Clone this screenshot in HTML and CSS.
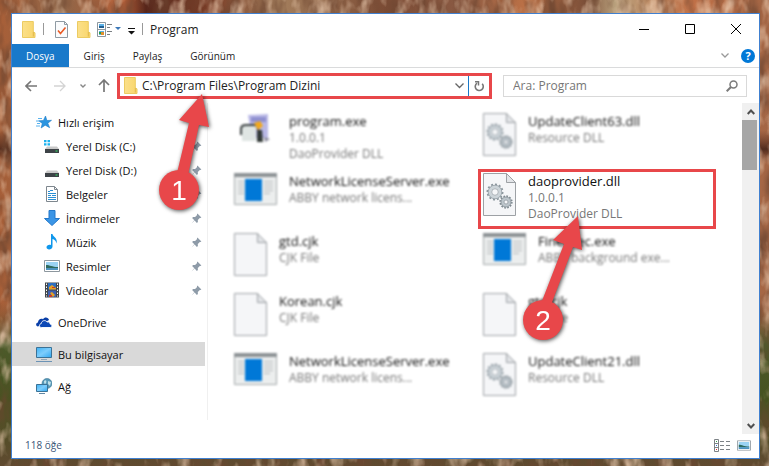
FILE: index.html
```
<!DOCTYPE html>
<html lang="tr">
  <head>
    <meta charset="UTF-8">
    <meta name="viewport" content="width=device-width, initial-scale=1">
    <title>Program</title>

    <link rel="stylesheet" href="styles.css">
  </head>
  <body>
    <!-- icons used more than once -->
    <svg class="sprite" aria-hidden="true">
      <defs>
        <linearGradient id="foldFill" x1="0" y1="0" x2="1" y2="0">
          <stop offset="0" stop-color="#fbe08a"/>
          <stop offset="1" stop-color="#f9d66c"/>
        </linearGradient>
        <linearGradient id="screenFill" x1="0" y1="0" x2="1" y2="1">
          <stop offset="0" stop-color="#3fb2f5"/>
          <stop offset=".5" stop-color="#7dcdfc"/>
          <stop offset="1" stop-color="#2fa6f0"/>
        </linearGradient>
      </defs>
      <symbol id="folder" viewBox="0 0 14 17">
        <path d="M.5.5h10.800v10.500l1.700.8v4.700H.5z" fill="url(#foldFill)" stroke="#eccb62"/>
        <path d="M11.300 11v4.500" stroke="#e0b84c" fill="none"/>
      </symbol>
      <symbol id="pin" viewBox="0 0 11 11">
        <path d="M6.400.6l4 4-1 .5-.6-.2-2 2 .1 2-1 1L3.600 7.600.500 10.500 3.300 7.200 1.100 5l1-1 2 .1 2-2-.2-.6z" fill="#8e9ba8"/>
      </symbol>
      <symbol id="drive" viewBox="0 0 16 16">
        <path d="M3 8.500h10l2 2.500H1z" fill="#c9c9c9"/>
        <path d="M1 11h14v4H1z" fill="#3d4347"/>
        <path d="M11.500 12.500h2v1h-2z" fill="#36e066"/>
      </symbol>
      <symbol id="doc" viewBox="0 0 33 43">
        <path d="M.5.500h23l9 9v33H.5z" fill="#f5f6f8" stroke="#9da1a5"/>
        <path d="M23.500.500v9h9z" fill="#e3e5e8" stroke="#9da1a5"/>
      </symbol>
      <symbol id="gears" viewBox="0 0 33 43">
        <use href="#doc"/>
        <circle cx="12" cy="19" r="7.500" fill="none" stroke="#8c979e" stroke-width="2" stroke-dasharray="2 1.900"/>
        <circle cx="12" cy="19" r="5.200" fill="#f5f6f8" stroke="#ccd4d9" stroke-width="3.400"/>
        <circle cx="12" cy="19" r="6.800" fill="none" stroke="#8c979e" stroke-width=".7"/>
        <circle cx="12" cy="19" r="3.300" fill="#f5f6f8" stroke="#8c979e" stroke-width=".7"/>
        <circle cx="23" cy="29" r="5.800" fill="none" stroke="#7f8a91" stroke-width="1.700" stroke-dasharray="1.700 1.300"/>
        <circle cx="23" cy="29" r="3.700" fill="#f5f6f8" stroke="#bcc5cb" stroke-width="3"/>
        <circle cx="23" cy="29" r="5" fill="none" stroke="#7f8a91" stroke-width=".7"/>
        <circle cx="23" cy="29" r="2" fill="#f5f6f8" stroke="#7f8a91" stroke-width=".7"/>
      </symbol>
      <symbol id="app" viewBox="0 0 43 33">
        <path d="M.5.500h42v31H.5z" fill="#eceeee" stroke="#a3a8aa"/>
        <path d="M0 0h43v4H0z" fill="#8d9295"/>
        <path d="M4 8.500h6M4 11.500h6M4 14.500h6M4 17.500h6M4 20.500h6M30 8.500h9M30 11.500h9M30 14.500h9M30 17.500h9M30 20.500h6" stroke="#b5b9bb"/>
        <path d="M11 6h17v22H11z" fill="#0078d7"/>
      </symbol>
      <symbol id="picture" viewBox="0 0 16 12">
        <path d="M.5.500h15v11H.5z" fill="#fff" stroke="#8d979e"/>
        <path d="M2 2h12v8H2z" fill="#9bd3f3"/>
        <path d="M2 5c4 0 6 2 12 2v1H2z" fill="#2e6a5e"/>
        <path d="M2 8h12v2H2z" fill="#4d93bf"/>
      </symbol>
    </svg>

    <!-- bark wallpaper -->
    <svg class="wallpaper" aria-hidden="true">
      <defs>
        <linearGradient id="bark">
          <stop offset="0" stop-color="#a85f38"/>
          <stop offset=".08" stop-color="#8d6548"/>
          <stop offset=".16" stop-color="#b9623a"/>
          <stop offset=".19" stop-color="#56251a"/>
          <stop offset=".28" stop-color="#7c4029"/>
          <stop offset=".36" stop-color="#a5805e"/>
          <stop offset=".5" stop-color="#7c4c35"/>
          <stop offset=".6" stop-color="#8a5a43"/>
          <stop offset=".68" stop-color="#ba7046"/>
          <stop offset=".76" stop-color="#7d5039"/>
          <stop offset=".8" stop-color="#b8a07c"/>
          <stop offset=".9" stop-color="#c07047"/>
          <stop offset="1" stop-color="#a36645"/>
        </linearGradient>
        <linearGradient id="ground" x1="0" y1="0" x2="0" y2="1">
          <stop offset=".28" stop-color="#4a2015" stop-opacity="0"/>
          <stop offset=".32" stop-color="#2d120d" stop-opacity=".7"/>
          <stop offset=".35" stop-color="#4a2015" stop-opacity="0"/>
          <stop offset=".65" stop-color="#6b4a30" stop-opacity="0"/>
          <stop offset=".74" stop-color="#4c5a2a"/>
          <stop offset=".86" stop-color="#46521f"/>
          <stop offset="1" stop-color="#604a30"/>
        </linearGradient>
        <filter id="grain" x="0" y="0" width="100%" height="100%">
          <feTurbulence type="fractalNoise" baseFrequency=".07 .03" numOctaves="3" seed="7"/>
          <feColorMatrix values="0 0 0 0 .15  0 0 0 0 .06  0 0 0 0 .03  2 0 0 0 -.85"/>
        </filter>
        <filter id="light" x="0" y="0" width="100%" height="100%">
          <feTurbulence type="fractalNoise" baseFrequency=".08 .04" numOctaves="3" seed="21"/>
          <feColorMatrix values="0 0 0 0 .85  0 0 0 0 .62  0 0 0 0 .45  0 1.800 0 0 -.85"/>
        </filter>
      </defs>
      <rect width="100%" height="100%" fill="url(#bark)"/>
      <rect width="100%" height="100%" fill="url(#ground)"/>
      <rect width="100%" height="100%" filter="url(#grain)"/>
      <rect width="100%" height="100%" filter="url(#light)"/>
    </svg>

    <main class="window">
      <header class="titlebar">
        <svg class="folder" aria-hidden="true"><use href="#folder"/></svg>
        <span class="divider"></span>
        <button class="quick" aria-label="Özellikler">
          <svg width="13" height="17" viewBox="0 0 13 17">
            <path d="M.5.500h9l3 3v13H.5z" fill="#fafbfc" stroke="#8f9aa3"/>
            <path d="M9.500.500v3h3" fill="none" stroke="#8f9aa3"/>
            <path d="M3 9.500l2.500 3 5-6" fill="none" stroke="#ea5a24" stroke-width="1.600"/>
          </svg>
        </button>
        <button class="quick" aria-label="Yeni klasör">
          <svg class="folder"><use href="#folder"/></svg>
        </button>
        <button class="quick view" aria-label="Görünüm seçenekleri">
          <svg width="24" height="15" viewBox="0 0 24 15">
            <path d="M.5.500h8v14h-8zM.5 7.500h8" fill="#fff" stroke="#8d979e"/>
            <path d="M2 2h5v2H2z" fill="#5bb1e8"/>
            <path d="M2 4h5v2H2z" fill="#1f5f92"/>
            <path d="M2 9h5v4H2z" fill="#5bb1e8"/>
            <path d="M4 10h3v3H4z" fill="#e0902c"/>
            <path d="M2 10h2v2H2z" fill="#2c9c3e"/>
            <path d="M10 2.500h5M10 5.500h3M10 9.500h5M10 12.500h3" stroke="#7a7f83"/>
            <path d="M18 5h6l-3 3z" fill="#3c78b8"/>
          </svg>
        </button>
        <button class="quick more" aria-label="Özelleştir">
          <svg width="7" height="7" viewBox="0 0 7 7">
            <path d="M0 0h7v1H0zM0 3h7L3.500 6.500z" fill="#111"/>
          </svg>
        </button>
        <span class="divider"></span>
        <h1>Program</h1>
        <div class="controls">
          <button aria-label="Simge durumuna küçült">
            <svg width="10" height="10" viewBox="0 0 10 10"><path d="M0 5.500h10" stroke="#000"/></svg>
          </button>
          <button aria-label="Ekranı kapla">
            <svg width="10" height="10" viewBox="0 0 10 10"><path d="M.5.500h9v9h-9z" fill="none" stroke="#000"/></svg>
          </button>
          <button aria-label="Kapat">
            <svg width="10" height="10" viewBox="0 0 10 10"><path d="M0 0l10 10M10 0L0 10" stroke="#000"/></svg>
          </button>
        </div>
      </header>

      <div class="ribbon">
        <button class="tab active">Dosya</button>
        <button class="tab">Giriş</button>
        <button class="tab">Paylaş</button>
        <button class="tab">Görünüm</button>
        <div class="ribbon-tools">
          <button aria-label="Şeridi genişlet">
            <svg width="8" height="5" viewBox="0 0 8 5"><path d="M.5.500L4 4 7.500.500" fill="none" stroke="#999" stroke-width="1.300"/></svg>
          </button>
          <button class="help" aria-label="Yardım">?</button>
        </div>
      </div>

      <div class="toolbar">
        <div class="history">
          <button aria-label="Geri">
            <svg width="12" height="12" viewBox="0 0 12 12"><path d="M6 1L1 6l5 5M1 6h11" fill="none" stroke="#777" stroke-width="1.600"/></svg>
          </button>
          <button aria-label="İleri">
            <svg width="12" height="12" viewBox="0 0 12 12"><path d="M6 1l5 5-5 5M11 6H0" fill="none" stroke="#d4d4d4" stroke-width="1.300"/></svg>
          </button>
          <button aria-label="Son konumlar">
            <svg width="6" height="4" viewBox="0 0 6 4"><path d="M.5.500L3 3 5.500.500" fill="none" stroke="#888" stroke-width="1.400"/></svg>
          </button>
          <button aria-label="Yukarı">
            <svg width="12" height="13" viewBox="0 0 12 13"><path d="M1 6l5-5 5 5M6 1v12" fill="none" stroke="#777" stroke-width="1.700"/></svg>
          </button>
        </div>
        <div class="address">
          <svg class="folder" aria-hidden="true"><use href="#folder"/></svg>
          <input type="text" value="C:\Program Files\Program Dizini" aria-label="Adres">
          <button class="recent" aria-label="Önceki konumlar">
            <svg width="9" height="6" viewBox="0 0 9 6"><path d="M.5.500l4 4 4-4" fill="none" stroke="#666" stroke-width="1.300"/></svg>
          </button>
          <button class="refresh" aria-label="Yenile">
            <svg width="10" height="12" viewBox="0 0 10 12">
              <path d="M8.200 3.800A4 4 0 1 1 3 3.200" fill="none" stroke="#777" stroke-width="1.600"/>
              <path d="M1 1.800h3.500v3.700" fill="none" stroke="#777" stroke-width="1.500"/>
            </svg>
          </button>
        </div>
        <div class="search">
          <input type="search" placeholder="Ara: Program" aria-label="Ara">
          <svg width="12" height="12" viewBox="0 0 12 12" aria-hidden="true">
            <circle cx="7.500" cy="4.500" r="3.500" fill="none" stroke="#7b7b7b" stroke-width="1.500"/>
            <path d="M5 7L.7 11.300" stroke="#7b7b7b" stroke-width="2"/>
          </svg>
        </div>
      </div>

      <div class="content">
        <nav class="sidebar">
          <ul>
            <li><a class="root" href="#">
              <svg viewBox="0 0 16 16"><path d="M9.500 2l1.400 4.500 4.600-.2-3.700 2.900 1.900 4.500-4.500-2.500-4.100 2.800 1.200-4.600-3.500-2.600 4.600-.3z" fill="#2b95e0" stroke="#1c7cc8" stroke-width=".6"/><path d="M2 4.500h4M0 7h3M1 9.500h3M0 12h4" stroke="#58b2ee"/></svg>
              Hızlı erişim</a></li>
            <li><a href="#">
              <svg viewBox="0 0 16 16"><use href="#drive"/><path d="M0 2h2.500v2.300H0zM3.500 2H6v2.300H3.500zM0 5.300h2.500v2.300H0zM3.500 5.300H6v2.300H3.500z" fill="#19b1ee"/></svg>
              Yerel Disk (C:)<svg class="pin"><use href="#pin"/></svg></a></li>
            <li><a href="#">
              <svg viewBox="0 0 16 16"><use href="#drive"/></svg>
              Yerel Disk (D:)<svg class="pin"><use href="#pin"/></svg></a></li>
            <li><a href="#">
              <svg viewBox="0 0 16 16"><path d="M2.500.500h8l3 3v12h-11z" fill="#fff" stroke="#7e878e"/><path d="M10.500.500v3h3" fill="none" stroke="#7e878e"/><path d="M4 5.500h2M4 7.500h8M4 9.500h3M4 11.500h8M4 13.500h8M8 9.500h4M6 4.500h3" stroke="#2a8fd4"/></svg>
              Belgeler<svg class="pin"><use href="#pin"/></svg></a></li>
            <li><a href="#">
              <svg viewBox="0 0 16 16"><path d="M5 .5h6v8h4.500L8 15.500.500 8.500H5z" fill="#3a95e6" stroke="#2277c9"/></svg>
              İndirmeler<svg class="pin"><use href="#pin"/></svg></a></li>
            <li><a href="#">
              <svg viewBox="0 0 16 16"><path d="M7 0h1.500c.5 3 5.500 3.500 4 9.500-.4-2.600-2-4-4-4.500v7.500C8.500 16 2.500 16.500 2.500 13.300 2.500 11.200 5 10.200 7 11z" fill="#0f97ec"/></svg>
              Müzik<svg class="pin"><use href="#pin"/></svg></a></li>
            <li><a href="#">
              <svg viewBox="0 0 16 12"><use href="#picture"/></svg>
              Resimler<svg class="pin"><use href="#pin"/></svg></a></li>
            <li><a href="#">
              <svg viewBox="0 0 16 16"><path d="M1 .5h14v15H1z" fill="#42474b"/><path d="M4 1h8v6.500H4z" fill="#2e6fc0"/><path d="M4 8.500h8V15H4z" fill="#3d5fae"/><path d="M5 5l3-2 4 3v1.500H5zM6 11l2-1 3 3-2 2z" fill="#e6a224"/><path d="M8 5h3v1H8zM5 13h3v2H5z" fill="#c93b2b"/><path d="M2.500 1.500v13M13.500 1.500v13" stroke="#fff" stroke-dasharray="1.500 1.500"/></svg>
              Videolar<svg class="pin"><use href="#pin"/></svg></a></li>
          </ul>
          <ul>
            <li><a class="root" href="#">
              <svg viewBox="0 0 16 16"><path d="M2 12.500C-.5 12.500-.5 8.700 2 8.500 2 5.500 5 4 7 5.200 8.500 2.500 12.500 3 13 6" fill="#0a3fa8"/><path d="M5.500 13.500c-2.800 0-2.600-3.600-.2-4C5.500 6.500 9.500 5.500 11 8c2-.6 3 .8 3 1.900 2.600.2 2.400 3.600.2 3.600z" fill="#0c49b6" stroke="#fff" stroke-width=".9"/></svg>
              OneDrive</a></li>
          </ul>
          <ul>
            <li><a class="root selected" href="#">
              <svg viewBox="0 0 16 16"><path d="M.5 1.500h15v10H.5z" fill="url(#screenFill)" stroke="#3b7296"/><path d="M5 13.500h6" stroke="#93a8b8"/><path d="M0 15.500h16" stroke="#6c93b5"/></svg>
              Bu bilgisayar</a></li>
          </ul>
          <ul>
            <li><a class="root" href="#">
              <svg viewBox="0 0 16 16"><circle cx="11" cy="5.500" r="5" fill="#5598b8" stroke="#3f7896" stroke-width=".6"/><path d="M8 3c2-2 3 0 2 2s-2 1-2-2zM12 3l3 1-1 4-2-2z" fill="#bfe0ea"/><path d="M.5 6.500h11v7H.5z" fill="url(#screenFill)" stroke="#3b7296"/><path d="M3 15.500h6" stroke="#5f87a5"/></svg>
              Ağ</a></li>
          </ul>
        </nav>

        <ul class="files">
          <li class="file blurred">
            <svg class="app" viewBox="0 0 43 33">
              <path d="M14 2l20-1v24H18z" fill="#b9b8e6"/>
              <path d="M17 4h15v5H17z" fill="#8f90d0"/>
              <path d="M8 13h14v15H8z" fill="#dfe5e3"/>
              <path d="M7 22v-6q0-4 5-4h8q4 0 4 4v12" fill="none" stroke="#3c4243" stroke-width="2"/>
              <path d="M20 10l6-2 3 5-5 4z" fill="#f2a81d"/>
              <path d="M24 17h4l1 12h-6z" fill="#333a38"/>
              <path d="M30 24l6 2-5 3z" fill="#8b8b9d"/>
            </svg>
            <div class="details"><strong>program.exe</strong><span>1.0.0.1</span><span>DaoProvider DLL</span></div>
          </li>
          <li class="file blurred">
            <svg class="doc"><use href="#gears"/></svg>
            <div class="details"><strong>UpdateClient63.dll</strong><span>Resource DLL</span></div>
          </li>
          <li class="file blurred">
            <svg class="app"><use href="#app"/></svg>
            <div class="details"><strong>NetworkLicenseServer.exe</strong><span>ABBY network licens...</span></div>
          </li>
          <li class="file highlighted">
            <svg class="doc"><use href="#gears"/></svg>
            <div class="details"><strong>daoprovider.dll</strong><span>1.0.0.1</span><span>DaoProvider DLL</span></div>
            <svg class="step step2" viewBox="0 0 72 132" role="img" aria-label="2">
              <path d="M56 5l4 34-9-3-22 58-9-4 22-57-11-4z"/>
              <circle cx="21" cy="109" r="20"/>
              <text x="21" y="119">2</text>
            </svg>
          </li>
          <li class="file blurred">
            <svg class="doc"><use href="#doc"/></svg>
            <div class="details"><strong>gtd.cjk</strong><span>CJK File</span></div>
          </li>
          <li class="file blurred">
            <svg class="app"><use href="#app"/></svg>
            <div class="details"><strong>FineExec.exe</strong><span>ABBY background exe...</span></div>
          </li>
          <li class="file blurred">
            <svg class="doc"><use href="#doc"/></svg>
            <div class="details"><strong>Korean.cjk</strong><span>CJK File</span></div>
          </li>
          <li class="file blurred">
            <svg class="doc"><use href="#doc"/></svg>
            <div class="details"><strong>gtd.cjk</strong><span>CJK File</span></div>
          </li>
          <li class="file blurred">
            <svg class="app"><use href="#app"/></svg>
            <div class="details"><strong>NetworkLicenseServer.exe</strong><span>ABBY network licens...</span></div>
          </li>
          <li class="file blurred">
            <svg class="doc"><use href="#gears"/></svg>
            <div class="details"><strong>UpdateClient21.dll</strong><span>Resource DLL</span></div>
          </li>
        </ul>

        <div class="scrollbar">
          <button aria-label="Yukarı kaydır">
            <svg width="8" height="6" viewBox="0 0 8 6"><path d="M.7 5L4 1.500 7.300 5" fill="none" stroke="#505050" stroke-width="2"/></svg>
          </button>
          <div class="thumb"></div>
          <button class="down" aria-label="Aşağı kaydır">
            <svg width="8" height="6" viewBox="0 0 8 6"><path d="M.7 1L4 4.500 7.300 1" fill="none" stroke="#505050" stroke-width="2"/></svg>
          </button>
        </div>
      </div>

      <footer class="status">
        <span>118 öğe</span>
        <button aria-label="Ayrıntılar">
          <svg width="16" height="13" viewBox="0 0 16 13">
            <path d="M.5.500h4v12h-4zM.5 4.500h4M.5 8.500h4M6 2.500h4M12 2.500h4M6 6.500h4M12 6.500h4M6 10.500h4M12 10.500h4" fill="none" stroke="#7d8286"/>
            <path d="M2 2h1v1H2z" fill="#2f9e44"/><path d="M2 6h1v1H2z" fill="#2a6fd0"/><path d="M2 10h1v1H2z" fill="#e02b2b"/>
          </svg>
        </button>
        <button aria-label="Büyük simgeler">
          <svg width="14" height="11" viewBox="0 0 16 12"><use href="#picture"/></svg>
        </button>
      </footer>

      <svg class="step step1" viewBox="0 0 60 124" role="img" aria-label="1">
        <path d="M44 2l7 33-10-2-11 50-11-2 12-50-10-3z"/>
        <circle cx="21" cy="98" r="20"/>
        <text x="21" y="108">1</text>
      </svg>
    </main>
  </body>
</html>
```
FILE: styles.css
```
html {
  box-sizing: border-box;
  font-family: "Open Sans", "Noto Sans", sans-serif;
  font-size: 12px;
}

*,
*:before,
*:after {
  box-sizing: inherit;
}

body {
  background: #8a5a43;
  display: flex;
  margin: 0;
  min-height: 100vh;
  padding: 13px 9px 7px 11px;
}

ul {
  list-style: none;
  margin: 0;
  padding: 0;
}

button {
  align-items: center;
  background: none;
  border: 0;
  color: inherit;
  display: flex;
  font: inherit;
  justify-content: center;
  padding: 0;
}

input {
  background: none;
  border: 0;
  flex: 1;
  font: inherit;
  min-width: 0;
  outline: 0;
  padding: 0;
}

svg {
  display: block;
  flex: none;
}

.sprite {
  height: 0;
  position: absolute;
  width: 0;
}

.wallpaper {
  height: 100%;
  left: 0;
  position: absolute;
  top: 0;
  width: 100%;
}

.window {
  background: #fff;
  border: 1px solid #4080d0;
  display: flex;
  flex: 1;
  flex-direction: column;
  min-width: 0;
  position: relative;
}

.folder {
  height: 17px;
  width: 14px;
}

/* title bar */

.titlebar {
  align-items: center;
  display: flex;
  height: 30px;
  padding-left: 10px;
}

.titlebar h1 {
  color: #222;
  font-size: 12px;
  font-weight: 400;
  margin: 0 0 0 7px;
}

.divider {
  background: #999;
  height: 12px;
  margin-left: 7px;
  width: 1px;
}

.quick {
  margin-left: 9px;
}

.divider + .quick {
  margin-left: 11px;
}

.quick.view {
  margin-left: 6px;
}

.quick.more {
  margin-left: 7px;
  margin-top: 4px;
}

.controls {
  display: flex;
  margin-left: auto;
}

.controls button {
  height: 28px;
  width: 46px;
}

/* ribbon tabs */

.ribbon {
  border-bottom: 1px solid #dadbdc;
  display: flex;
  height: 24px;
}

.tab {
  color: #222;
  font-size: 10px;
  padding: 0 14px;
}

.tab.active {
  background: #1979ca;
  color: #fff;
  margin-right: 1px;
}

.ribbon-tools {
  align-items: center;
  display: flex;
  gap: 12px;
  margin-left: auto;
  padding-right: 4px;
}

.help {
  background: #0078d7;
  border-radius: 50%;
  color: #fff;
  font-size: 11px;
  font-weight: 700;
  height: 14px;
  width: 14px;
}

/* address row */

.toolbar {
  align-items: center;
  display: flex;
  height: 35px;
  padding: 0 12px 0 13px;
}

.history {
  align-items: center;
  display: flex;
  gap: 14px;
  width: 92px;
}

.history button:nth-child(2) {
  margin-left: 3px;
}

.history button:last-child {
  margin-left: -2px;
}

.address {
  align-items: center;
  border: 3px solid #e8474a;
  display: flex;
  flex: 365 1 0;
  height: 26px;
  padding-left: 4px;
}

.address input {
  color: #222;
  padding-left: 4px;
}

.recent {
  align-self: stretch;
  border-right: 1px solid #1979ca;
  width: 18px;
}

.refresh {
  width: 20px;
}

.search {
  align-items: center;
  border: 1px solid #d9d9d9;
  display: flex;
  flex: 225 1 0;
  height: 22px;
  margin-left: 11px;
  padding: 0 8px 0 9px;
}

.search input::placeholder {
  color: #767676;
  opacity: 1;
}

/* folder tree and files */

.content {
  display: flex;
  flex: 1;
}

.sidebar {
  border-right: 1px solid #f0f0f0;
  margin-bottom: 14px;
  padding-right: 2px;
  padding-top: 7px;
  width: 196px;
}

.sidebar ul + ul {
  margin-top: 8px;
}

.sidebar a {
  align-items: center;
  color: #111;
  display: flex;
  font-size: 11px;
  gap: 6px;
  height: 24px;
  padding: 0 3px 0 32px;
  text-decoration: none;
}

.sidebar a.root {
  padding-left: 24px;
}

.sidebar a.selected {
  background: #d9d9d9;
}

.sidebar svg {
  height: 16px;
  width: 16px;
}

.sidebar .pin {
  height: 11px;
  margin-left: auto;
  width: 11px;
}

.files {
  align-content: start;
  column-gap: 11px;
  display: grid;
  flex: 1;
  grid-auto-rows: 60px;
  grid-template-columns: 1fr 1fr;
  padding: 6px 26px 0 21px;
}

.file {
  border: 3px solid transparent;
  display: flex;
  gap: 12px;
  padding-left: 2px;
  position: relative;
}

.file .app {
  height: 33px;
  margin-top: 1px;
  width: 43px;
}

.file .doc {
  height: 43px;
  margin-top: 1px;
  width: 33px;
}

.blurred .app,
.blurred .doc,
.blurred .details {
  filter: blur(1.3px);
}

.highlighted {
  border-color: #e8474a;
  z-index: 1;
}

.details {
  color: #777;
  line-height: 16px;
  white-space: nowrap;
}

.details strong {
  color: #111;
  display: block;
  font-size: 13px;
  font-weight: 400;
  line-height: 18px;
}

.details span {
  display: block;
}

.scrollbar {
  background: #f0f0f0;
  display: flex;
  flex-direction: column;
  width: 17px;
}

.scrollbar button {
  height: 17px;
}

.scrollbar .down {
  margin-top: auto;
}

.thumb {
  background: #a6a6a6;
  height: 50px;
  margin-right: 2px;
}

/* status bar */

.status {
  align-items: center;
  color: #3b5577;
  display: flex;
  font-size: 10px;
  gap: 7px;
  height: 24px;
  padding: 0 8px 2px 13px;
}

.status span {
  margin-right: auto;
}

/* numbered arrows */

.step {
  filter: drop-shadow(1px 1px 2px rgba(0, 0, 0, 0.7));
  overflow: visible;
  position: absolute;
}

.step path,
.step circle {
  fill: #e8474a;
}

.step text {
  fill: #fff;
  font-family: "Liberation Sans", Arial, sans-serif;
  font-size: 28px;
  text-anchor: middle;
}

.step1 {
  height: 124px;
  left: 146px;
  top: 78px;
  width: 60px;
}

.step2 {
  height: 132px;
  left: 41px;
  top: 39px;
  width: 72px;
}
```
